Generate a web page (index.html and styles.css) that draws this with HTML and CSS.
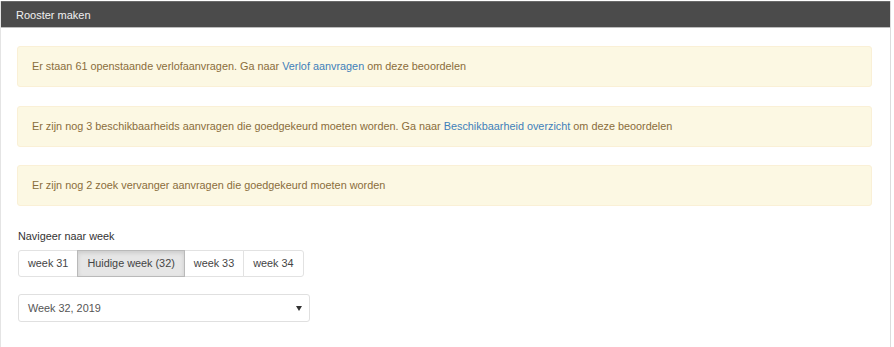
FILE: index.html
```html
<!DOCTYPE html>
<html lang="nl">
<head>
<meta charset="utf-8">
<title>Rooster maken</title>
<link rel="stylesheet" href="styles.css">
</head>
<body>
<div class="panel">
  <div class="panel-heading">Rooster maken</div>
  <div class="panel-body">
    <div class="alert">Er staan 61 openstaande verlofaanvragen. Ga naar <a href="#">Verlof aanvragen</a> om deze beoordelen</div>
    <div class="alert">Er zijn nog 3 beschikbaarheids aanvragen die goedgekeurd moeten worden. Ga naar <a href="#">Beschikbaarheid overzicht</a> om deze beoordelen</div>
    <div class="alert">Er zijn nog 2 zoek vervanger aanvragen die goedgekeurd moeten worden</div>
    <div class="label">Navigeer naar week</div>
    <div class="btn-group">
      <span class="btn">week 31</span>
      <span class="btn active">Huidige week (32)</span>
      <span class="btn">week 33</span>
      <span class="btn">week 34</span>
    </div>
    <div class="select">
      <span>Week 32, 2019</span>
      <span class="caret"></span>
    </div>
  </div>
</div>
</body>
</html>
```
FILE: styles.css
```css
html, body {
  margin: 0;
  padding: 0;
  background: #fff;
  font-family: "Liberation Sans", Arial, sans-serif;
  font-size: 10.85px;
  color: #333;
}
.panel {
  width: 891px;
  height: 346px;
  border-right: 1px solid #dcdcdc;
  border-left: 1px solid #e4e4e4;
  box-sizing: border-box;
}
.panel-heading {
  margin-top: 1px;
  height: 27px;
  line-height: 26px;
  background: #4b4b4b;
  border-top: 1px solid #6a6a6a;
  border-bottom: 1px solid #bdbdbd;
  box-sizing: border-box;
  color: #f0f0f0;
  padding-left: 15px;
  font-size: 11px;
}
.panel-body {
  padding: 18px 18px 0 16px;
}
.alert {
  background: #fcf8e3;
  border: 1px solid #faf0d6;
  border-radius: 3px;
  color: #8a6d3b;
  padding: 11px 14px;
  line-height: 17px;
  margin-bottom: 18.5px;
}
.alert a {
  color: #3f7fb9;
  text-decoration: none;
}
.label {
  margin-top: 23px;
  margin-left: 1px;
  line-height: 15px;
  color: #333;
}
.btn-group {
  display: flex;
  margin-top: 6px;
  margin-left: 1px;
}
.btn {
  display: block;
  height: 27px;
  line-height: 25px;
  box-sizing: border-box;
  border: 1px solid #e2e2e2;
  margin-left: -1px;
  padding: 0 9px;
  color: #444;
  background: #fff;
}
.btn:first-child {
  margin-left: 0;
  border-radius: 3px 0 0 3px;
}
.btn:last-child {
  border-radius: 0 3px 3px 0;
}
.btn.active {
  background: #e6e6e6;
  border-color: #b9b9b9;
  box-shadow: inset 0 2px 4px rgba(0,0,0,0.12);
  position: relative;
  padding: 0 9px;
}
.select {
  display: flex;
  align-items: center;
  justify-content: space-between;
  width: 292px;
  height: 28px;
  box-sizing: border-box;
  margin-top: 17px;
  margin-left: 1px;
  border: 1px solid #e0e0e0;
  border-radius: 3px;
  padding: 0 7px 0 9px;
  color: #555;
}
.caret {
  width: 0;
  height: 0;
  border-left: 3px solid transparent;
  border-right: 3px solid transparent;
  border-top: 5px solid #333;
  margin-top: 1px;
}
```
